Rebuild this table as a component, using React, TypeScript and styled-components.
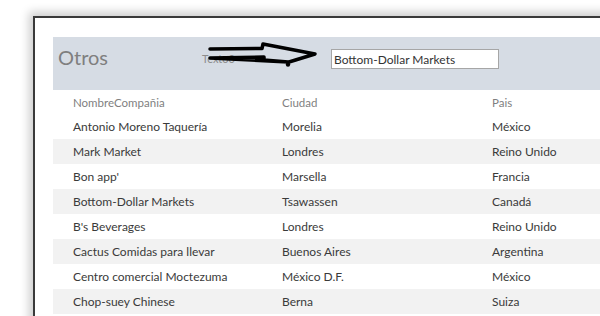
import React from "react";
import styled, { createGlobalStyle } from "styled-components";

const Global = createGlobalStyle`
  html, body { margin: 0; padding: 0; background: #ffffff; overflow: hidden; }
  body { width: 600px; height: 316px; }
`;

const Page = styled.div`
  width: 600px;
  height: 316px;
  overflow: hidden;
  padding: 16px 0 0 33px;
  box-sizing: border-box;
`;

const Window = styled.div`
  width: 640px;
  height: 340px;
  box-sizing: border-box;
  border-left: 2px solid #3a3a3a;
  border-top: 2px solid #3a3a3a;
  box-shadow: -4px -4px 9px rgba(0, 0, 0, 0.2);
  background: #ffffff;
  padding: 19px 0 0 18px;
  font-family: Lato, "Open Sans", sans-serif;
`;

const HeaderBand = styled.div`
  position: relative;
  height: 53px;
  background: #d6dce4;
  display: flex;
  align-items: flex-start;
`;

const Title = styled.div`
  font-size: 20px;
  color: #7f7f7f;
  margin: 8px 0 0 5px;
  width: 144px;
`;

const FieldLabel = styled.div`
  font-size: 11px;
  color: #8c8c8c;
  margin-top: 15px;
  width: 129px;
`;

const TextBox = styled.div`
  margin-top: 12px;
  width: 168px;
  height: 20px;
  box-sizing: border-box;
  border: 1px solid #a6a6a6;
  background: #ffffff;
  font-size: 12px;
  color: #333333;
  padding: 0 0 0 2px;
  display: flex;
  align-items: center;
`;

const Arrow = styled.svg`
  position: absolute;
  left: 155px;
  top: 5px;
  overflow: visible;
`;

const Grid = styled.div`
  display: grid;
  grid-template-columns: 209px 210px 1fr;
  padding-left: 20px;
  align-items: center;
`;

const HeadRow = styled(Grid)`
  height: 24px;
  font-size: 11.5px;
  color: #7f7f7f;
`;

const Row = styled(Grid)<{ $alt: boolean }>`
  height: 25px;
  font-size: 12px;
  color: #3a3a3a;
  background: ${(p) => (p.$alt ? "#f2f2f2" : "#ffffff")};
`;

const rows: [string, string, string][] = [
  ["Antonio Moreno Taquería", "Morelia", "México"],
  ["Mark Market", "Londres", "Reino Unido"],
  ["Bon app'", "Marsella", "Francia"],
  ["Bottom-Dollar Markets", "Tsawassen", "Canadá"],
  ["B's Beverages", "Londres", "Reino Unido"],
  ["Cactus Comidas para llevar", "Buenos Aires", "Argentina"],
  ["Centro comercial Moctezuma", "México D.F.", "México"],
  ["Chop-suey Chinese", "Berna", "Suiza"],
];

export default function App() {
  return (
    <>
      <Global />
      <Page>
        <Window>
          <HeaderBand>
            <Title>Otros</Title>
            <FieldLabel>Texto0</FieldLabel>
            <TextBox>Bottom-Dollar Markets</TextBox>
            <Arrow width="110" height="26" viewBox="0 0 110 26">
              <path
                d="M2,7 L54,6.5 L55,2 L107,12 L81,20 M80,20 L56,18 L56,15 L2,16 Z"
                fill="none"
                stroke="#000"
                strokeWidth="3.5"
                strokeLinejoin="round"
                strokeLinecap="round"
              />
              <circle cx="80" cy="22.5" r="2.2" fill="#000" />
            </Arrow>
          </HeaderBand>
          <HeadRow>
            <span>NombreCompañia</span>
            <span>Ciudad</span>
            <span>Pais</span>
          </HeadRow>
          {rows.map((r, i) => (
            <Row key={i} $alt={i % 2 === 1}>
              <span>{r[0]}</span>
              <span>{r[1]}</span>
              <span>{r[2]}</span>
            </Row>
          ))}
        </Window>
      </Page>
    </>
  );
}
